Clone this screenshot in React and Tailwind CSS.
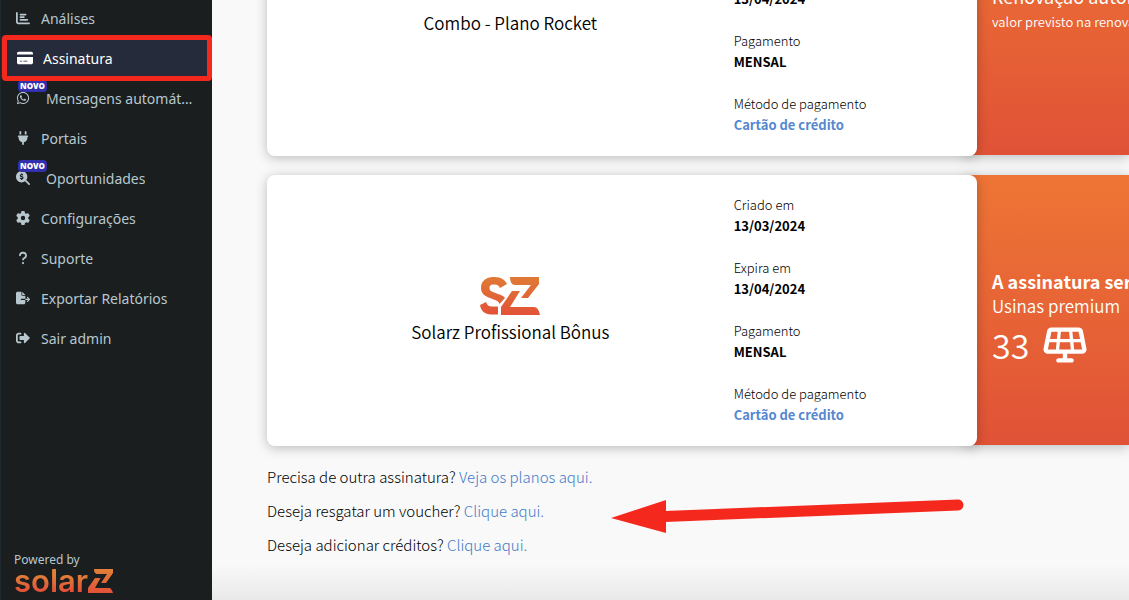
import {
  FaChartBar,
  FaCreditCard,
  FaWhatsapp,
  FaPlug,
  FaMagnifyingGlassDollar,
  FaGear,
  FaQuestion,
  FaFileExport,
  FaSolarPanel,
} from "react-icons/fa6";
import { FaSignOutAlt } from "react-icons/fa";

/* ── data ──────────────────────────────────────────────────── */
const menu = [
  { label: "Análises", icon: FaChartBar },
  { label: "Assinatura", icon: FaCreditCard, active: true },
  { label: "Mensagens automáticas", icon: FaWhatsapp, isNew: true },
  { label: "Portais", icon: FaPlug },
  { label: "Oportunidades", icon: FaMagnifyingGlassDollar, isNew: true },
  { label: "Configurações", icon: FaGear },
  { label: "Suporte", icon: FaQuestion },
  { label: "Exportar Relatórios", icon: FaFileExport },
  { label: "Sair admin", icon: FaSignOutAlt },
];

const details = [
  { label: "Criado em", value: "13/03/2024" },
  { label: "Expira em", value: "13/04/2024" },
  { label: "Pagamento", value: "MENSAL" },
  { label: "Método de pagamento", value: "Cartão de crédito", link: true },
];

const actions = [
  { question: "Precisa de outra assinatura?", link: "Veja os planos aqui." },
  { question: "Deseja resgatar um voucher?", link: "Clique aqui." },
  { question: "Deseja adicionar créditos?", link: "Clique aqui." },
];

/* ── logos ─────────────────────────────────────────────────── */
function SolarzMark() {
  return (
    <svg width="60" height="38" viewBox="0 0 60 38" aria-label="SolarZ" role="img">
      <defs>
        <linearGradient id="mark" x1="0" y1="0" x2="0" y2="1">
          <stop offset="0" stopColor="#e07a35" />
          <stop offset="1" stopColor="#e25238" />
        </linearGradient>
      </defs>
      <path
        fill="url(#mark)"
        d="M13 0H15C21 0 25 3 27 7L20 11C19 8.500 17 7.500 15 7.500H13C10.500 7.500 9.500 9 9.500 11C9.500 13 10.500 14 13 15L18 17C21 18 24 19 25 21L19.500 27C19 25 18 24 15 23L10 21C4 19 1 16 1 11C1 4 6 0 13 0ZM0 28L6 25C7 28 9 29.500 12 29.500H18V37.500H11C5 37.500 1 34 0 28ZM30 0H59V7L48 21H41L51 8H35C32 8 30 5 30 0ZM32 14H40L30 30H54C57 30 59 33 60 38H21V30Z"
      />
    </svg>
  );
}

function SolarzWordmark() {
  return (
    <div className="flex items-end">
      <span className="bg-gradient-to-b from-[#e08038] from-30% to-[#e25238] to-80% bg-clip-text font-['Inter'] text-[31px] leading-8 font-semibold text-transparent">
        solar
      </span>
      <svg className="mb-1" width="25" height="24" viewBox="0 0 25 24" aria-label="Z" role="img">
        <defs>
          <linearGradient id="word" x1="0" y1="0" x2="0" y2="1">
            <stop offset="0" stopColor="#e08038" />
            <stop offset="1" stopColor="#e25238" />
          </linearGradient>
        </defs>
        <path fill="url(#word)" d="M6 0H25V4L18 14H13L19 5H10C7 5 6 3 6 0ZM7 9H12.500L7 19H21C23 19 24 21 25 24H0V19Z" />
      </svg>
    </div>
  );
}

/* ── sidebar ───────────────────────────────────────────────── */
function MenuItem({ item }) {
  const Icon = item.icon;
  return (
    <li>
      <a
        href="#"
        className={`relative flex h-10 items-center pr-4 text-[14px] ${
          item.active
            ? "gap-[10px] bg-[#252b3a] pl-4 text-white"
            : item.isNew
              ? "gap-4 pl-[15px] text-[#b8c7ce]"
              : "gap-[11px] pl-[15px] text-[#b8c7ce]"
        }`}
      >
        <Icon className={item.active ? "size-4 shrink-0" : "size-[14px] shrink-0"} />
        <span className="truncate">{item.label}</span>
        {item.isNew && (
          <span className="absolute top-[2px] left-[17px] rounded bg-[#3330ad] px-[2px] text-[8px] leading-3 font-black text-white">
            NOVO
          </span>
        )}
      </a>
    </li>
  );
}

function Sidebar() {
  return (
    <aside className="relative flex w-[212px] shrink-0 flex-col justify-between border-l border-[#20282f] bg-[#1a1e1f] font-['Noto_Sans',sans-serif]">
      <nav className="-mt-[2px]">
        <ul>
          {menu.map((item) => (
            <MenuItem key={item.label} item={item} />
          ))}
        </ul>
      </nav>
      <div className="px-[13px] pb-[3px]">
        <p className="-mb-[3px] text-[12px] leading-4 text-[#b8c7ce]">Powered by</p>
        <SolarzWordmark />
      </div>
      {/* highlight around the active item */}
      <div className="pointer-events-none absolute top-[35px] right-0 left-px h-[46px] rounded-sm border-5 border-[#f5281e]" />
    </aside>
  );
}

/* ── subscription card ─────────────────────────────────────── */
function Card({ title, logo, children }) {
  return (
    <article className="grid grid-cols-[minmax(0,1fr)_152px]">
      <div className="relative z-10 grid grid-cols-3 rounded-lg bg-white px-5 pt-[19px] pb-[21px] shadow-[0_2px_12px_rgba(0,0,0,0.25)]">
        <div className="col-span-2 flex flex-col items-center justify-center pt-1">
          {logo}
          <h2 className="pt-[3px] text-[17px] leading-7 font-[350] text-black">{title}</h2>
        </div>
        <dl className="space-y-[21px] text-[13px] leading-[21px]">
          {details.map((d) => (
            <div key={d.label}>
              <dt className="font-light text-black">{d.label}</dt>
              <dd className="font-bold text-black">
                {d.link ? (
                  <a href="#" className="text-[#5588d0]">
                    {d.value}
                  </a>
                ) : (
                  d.value
                )}
              </dd>
            </div>
          ))}
        </dl>
      </div>
      <div className="mb-px -ml-3 flex flex-col justify-center overflow-hidden bg-gradient-to-b from-[#ee7535] to-[#e05236] pl-[27px] whitespace-nowrap text-white shadow-[0_2px_12px_rgba(0,0,0,0.25)]">
        {children}
      </div>
    </article>
  );
}

export default function App() {
  return (
    <div className="flex h-screen overflow-hidden bg-[#f9f9f9] font-['Noto_Sans_CJK_SC',sans-serif]">
      <Sidebar />
      <main className="relative min-w-0 flex-1 overflow-hidden bg-gradient-to-b from-[#f9f9f9] from-94% to-[#e9e9e9] pl-[55px]">
        <div className="-mt-[115px] space-y-[19px]">
          <Card title="Combo - Plano Rocket">
            <p className="text-[18px] leading-6">Renovação automática</p>
            <p className="pb-5 text-[13px] leading-7 font-[350]">valor previsto na renovação</p>
          </Card>
          <Card title="Solarz Profissional Bônus" logo={<SolarzMark />}>
            <p className="pt-5 text-[18px] leading-6 font-bold">A assinatura será renovada</p>
            <p className="text-[17px] leading-[26px] font-[350]">Usinas premium</p>
            <div className="flex items-center gap-[14px]">
              <span className="text-[34px] leading-[52px] font-[350]">33</span>
              <FaSolarPanel className="size-11" />
            </div>
          </Card>
        </div>
        <div className="mt-[19px] space-y-[10px] text-[15px] leading-6 font-light text-black">
          {actions.map((a) => (
            <p key={a.question}>
              {a.question}{" "}
              <a href="#" className="text-[#4479c8]">
                {a.link}
              </a>
            </p>
          ))}
        </div>
        {/* arrow pointing at the voucher link */}
        <svg className="pointer-events-none absolute top-[495px] left-[396px]" width="360" height="42" viewBox="0 0 360 42" aria-hidden="true">
          <path d="M57 21.500L350 10" stroke="#f5281e" strokeWidth="11" strokeLinecap="round" />
          <path d="M3 23L58 5V38Z" fill="#f5281e" />
        </svg>
      </main>
    </div>
  );
}
